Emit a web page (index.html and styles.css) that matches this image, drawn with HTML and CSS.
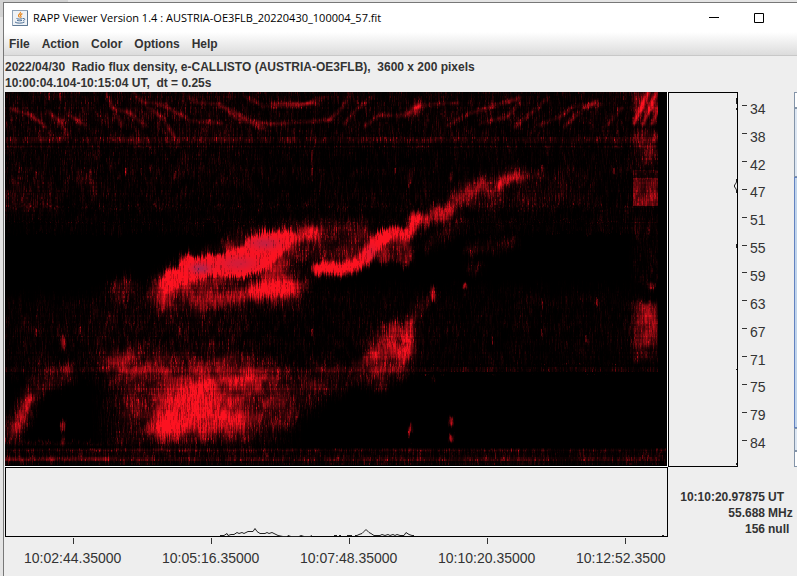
FILE: index.html
```html
<!DOCTYPE html>
<html lang="en">
<head>
<meta charset="utf-8">
<title>RAPP Viewer Version 1.4</title>
<link rel="stylesheet" href="styles.css">
</head>
<body>
<div class="window">
  <header class="titlebar">
    <svg class="app-icon" viewBox="0 0 16 16" aria-hidden="true">
      <rect x=".5" y=".5" width="15" height="15" fill="#eef2f6" stroke="#8fa3b8"/>
      <path d="M1 15.5h14.5V1" fill="none" stroke="#5d7894"/>
      <path d="M8.2 2c1.4 1.6-2.6 2.4-1.6 4.2l1 1.2M10.4 3.6C8.4 4.6 8 5.300 9 6.400c.4.6 0 1-.6 1.500" fill="none" stroke="#e8861c" stroke-width="1.200"/>
      <path d="M4.500 8.500c1.500.8 4.500.8 6 0M5 10.300c1.300.6 3.700.6 5 0M3 12c1.500 1.500 7.500 1.500 9.500 0M11 8.500c2.300-.5 2.300 1.600.2 2.300" fill="none" stroke="#4c6f96"/>
    </svg>
    <h1 class="title">RAPP Viewer Version 1.4 : AUSTRIA-OE3FLB_20220430_100004_57.fit</h1>
    <div class="controls">
      <button class="control" type="button" aria-label="Minimize"><svg viewBox="0 0 10 10"><path d="M0 4.500h10"/></svg></button>
      <button class="control" type="button" aria-label="Maximize"><svg viewBox="0 0 10 10"><path d="M.5.5h9v9h-9z"/></svg></button>
    </div>
  </header>
  <nav class="menubar">
    <button type="button">File</button>
    <button type="button">Action</button>
    <button type="button">Color</button>
    <button type="button">Options</button>
    <button type="button">Help</button>
  </nav>
  <section class="info">
    <p>2022/04/30  Radio flux density, e-CALLISTO (AUSTRIA-OE3FLB),  3600 x 200 pixels</p>
    <p>10:00:04.104-10:15:04 UT,  dt = 0.25s</p>
  </section>
  <main class="viewer">
    <div class="spectrum"><canvas id="spectrum" width="662" height="374" role="img" aria-label="Radio flux spectrogram"></canvas></div>
    <div class="frequency-profile">
      <svg viewBox="0 0 70 375" preserveAspectRatio="none" aria-hidden="true">
        <path d="M68.500 6v6M68.500 16v2M68.500 87v3l-1 2-1 1v2l1 1 1 2v3M68.500 152v4M68.500 277v1M68.500 371v2"/>
      </svg>
    </div>
    <div class="side">
      <ol class="y-axis">
        <li><span>34</span></li><li><span>38</span></li><li><span>42</span></li><li><span>47</span></li><li><span>51</span></li><li><span>55</span></li><li><span>59</span></li><li><span>63</span></li><li><span>67</span></li><li><span>71</span></li><li><span>75</span></li><li><span>79</span></li><li><span>84</span></li>
      </ol>
      <div class="scrollbar" aria-hidden="true"><i class="arrow"></i><i class="track"></i><i class="thumb"></i><i class="track-end"></i><i class="arrow"></i></div>
    </div>
    <div class="time-profile">
      <svg viewBox="0 0 663 70" preserveAspectRatio="none" aria-hidden="true">
        <path d="M215 68.500h4l3-2 1 2 3-1h3l3-2 2 1 3-1 2 1 4-2h5l2-3 2 3 3 2h5l2-1 2 1 3-1 2 1 4 2 5 1h4l1-1 3 1h8l2-1 3 1h6l2-1M329 68.500h3M334 68.500h2M342 68.500h5M350 68.500h2l2-1 3-1 2-2 2-2 3 3 2 1 3 2h6l2-1 3 1 3-1 2 1 3-1 2 1 2-1 3 1h4l2-3 3 2 3 1h2M657 68.500h2"/>
      </svg>
    </div>
    <dl class="readout">
      <dt>10:10:20.97875</dt><dd>UT</dd>
      <dt>55.688</dt><dd>MHz</dd>
      <dt>156</dt><dd>null</dd>
    </dl>
    <ol class="x-axis">
      <li>10:02:44.35000</li><li>10:05:16.35000</li><li>10:07:48.35000</li><li>10:10:20.35000</li><li>10:12:52.3500</li>
    </ol>
  </main>
</div>
<script src="spectrum.js"></script>
</body>
</html>
```
FILE: styles.css
```css
* { box-sizing: border-box; }

body {
  margin: 0;
  min-height: 100vh;
  padding: 2px 0 0 3px;
  display: flex;
  background: linear-gradient(#d2d2d2, #d2d2d2) 0 0 / 68px 17px no-repeat, #e4e4e4;
  color: #333;
  font: bold 12px/16px "Liberation Sans", Arial, sans-serif;
}

.window {
  flex: 1;
  min-width: 0;
  display: flex;
  flex-direction: column;
  border: solid #777;
  border-width: 1px 0 0 1px;
  background: #eee;
}

.titlebar {
  height: 29px;
  padding-left: 8px;
  display: flex;
  align-items: center;
  gap: 5px;
  background: #fff;
}
.app-icon { width: 16px; height: 16px; flex: none; }
.title {
  margin: 0;
  flex: 1;
  min-width: 0;
  overflow: hidden;
  white-space: nowrap;
  color: #000;
  font: 11px/20px "Open Sans", "Noto Sans", sans-serif;
}
.controls { display: flex; padding-right: 16px; }
.control {
  width: 45px;
  height: 29px;
  padding: 0;
  border: 0;
  background: none;
  display: grid;
  place-items: center;
}
.control svg { width: 10px; height: 10px; fill: none; stroke: #000; }

.menubar {
  height: 24px;
  padding-left: 5px;
  display: flex;
  align-items: center;
  gap: 12px;
  border-bottom: 1px solid #c8c8c8;
  background: linear-gradient(#fff, #dcdcdc);
}
.menubar button {
  padding: 0;
  border: 0;
  background: none;
  color: inherit;
  font: inherit;
}

.info { padding: 3px 0 1px 1px; }
.info p { margin: 0; white-space: pre; overflow: hidden; }

.viewer {
  flex: 1;
  padding-left: 1px;
  display: grid;
  grid-template-columns: minmax(0, 1fr) 70px 59px;
  grid-template-rows: minmax(240px, 1fr) 70px 39px;
}
.spectrum {
  position: relative;
  border: solid #fff;
  border-width: 0 1px 1px 0;
  background: #000;
}
.spectrum canvas {
  position: absolute;
  width: 100%;
  height: 100%;
}
.frequency-profile, .time-profile { position: relative; border: 1px solid #000; }
.viewer svg {
  position: absolute;
  inset: -1px;
  width: calc(100% + 2px);
  height: calc(100% + 2px);
  fill: none;
  stroke: #222;
}

.side { display: flex; justify-content: space-between; }
.y-axis {
  margin: 0;
  padding: 0 0 13px 4px;
  display: grid;
  grid-auto-rows: 1fr;
  list-style: none;
  font: 14px/16px "Liberation Sans", Arial, sans-serif;
}
.y-axis li { display: flex; align-items: center; gap: 3px; }
.y-axis li::before { content: ""; width: 5px; height: 1px; background: #333; }
.y-axis span { padding-top: 6px; }

.scrollbar { width: 3px; display: flex; flex-direction: column; }
.scrollbar i { border: 1px solid #8494a8; border-right: 0; }
.arrow { height: 16px; background: #fff; }
.track { flex: 68; background: #dce6f2; }
.thumb { flex: 253; background: #c0d4ec; }
.scrollbar .thumb { border-color: #6382bf; }
.track-end { flex: 21; background: #dce6f2; }

.readout {
  grid-column: 2 / 4;
  margin: 0;
  padding: 22px 0 0;
  display: grid;
  grid-template-columns: 1fr 29px;
  grid-auto-rows: 16px;
  column-gap: 3px;
}
.readout dt { text-align: right; }
.readout dd { margin: 0; }

.x-axis {
  margin: 0;
  padding: 0;
  display: grid;
  grid-template-columns: repeat(4, 138fr) 111fr;
  list-style: none;
  white-space: nowrap;
  font: 14px/16px "Liberation Sans", Arial, sans-serif;
}
.x-axis li { padding: 1px 0 0 19px; }
.x-axis li::before {
  content: "";
  display: block;
  width: 1px;
  height: 6px;
  margin: 0 0 6px 49px;
  background: #333;
}
```
FILE: spectrum.js
```js
const canvas = document.getElementById("spectrum");
const W = canvas.width, H = canvas.height;
const OX = 5, OY = 92;

// Brightness mask: every source is added in white, then modulated by noise.
const mask = document.createElement("canvas");
mask.width = W;
mask.height = H;
const m = mask.getContext("2d", { willReadFrequently: true });
m.fillStyle = "#000";
m.fillRect(0, 0, W, H);
m.translate(-OX, -OY);
m.lineJoin = "round";
m.lineCap = "round";

function setup(alpha, blur, color) {
  m.globalCompositeOperation = color ? "source-over" : "lighter";
  m.filter = blur ? `blur(${blur}px)` : "none";
  m.fillStyle = m.strokeStyle = color || "#fff";
  m.globalAlpha = alpha;
}
function line(points, width, alpha, blur) {
  setup(alpha, blur);
  m.lineWidth = width;
  m.beginPath();
  points.forEach(([x, y]) => m.lineTo(x, y));
  m.stroke();
}
function poly(points, alpha, blur, color) {
  setup(alpha, blur, color);
  m.beginPath();
  points.forEach(([x, y]) => m.lineTo(x, y));
  m.closePath();
  m.fill();
}
function rect(x, y, w, h, alpha, blur = 0, color) {
  poly([[x, y], [x + w, y], [x + w, y + h], [x, y + h]], alpha, blur, color);
}
function blob(x, y, rx, ry, alpha, blur) {
  setup(alpha, blur);
  m.beginPath();
  m.ellipse(x, y, rx, ry, 0, 0, Math.PI * 2);
  m.fill();
}

// Background bands
rect(5, 92, 661, 52, 0.07);
rect(5, 144, 661, 68, 0.04);
rect(5, 212, 661, 22, 0.03);
rect(95, 290, 565, 75, 0.045, 6);
rect(5, 300, 240, 75, 0.06, 6);
rect(5, 92, 230, 100, 0.03, 8);
rect(5, 137, 661, 6, 0.1);
rect(5, 146, 661, 2, 0.08);
rect(5, 206, 661, 2, 0.06);
rect(5, 222, 661, 1, 0.06);
rect(5, 367, 661, 5, 0.09);
rect(5, 448, 661, 17, 0.09);
rect(5, 449, 661, 2, 0.08);
rect(5, 457, 661, 4, 0.12);
rect(5, 457, 110, 4, 0.2, 1);
rect(5, 442, 110, 3, 0.1, 1);
blob(30, 195, 24, 18, 0.12, 6);
blob(90, 180, 10, 10, 0.1, 5);

// Drifting interference near the top of the band
[
  [[12, 109], [30, 115], [46, 127]],
  [[48, 111], [58, 119], [68, 135]],
  [[68, 114], [86, 126]],
  [[106, 94], [113, 108], [122, 126]],
  [[112, 108], [130, 113], [146, 126]],
  [[134, 93], [146, 105], [164, 119], [174, 136]],
  [[146, 102], [165, 106], [192, 121], [222, 123]],
  [[185, 94], [198, 103], [222, 105], [250, 121], [272, 124], [330, 120]],
  [[222, 107], [238, 119], [264, 128]],
  [[245, 96], [262, 106], [300, 106], [324, 97]],
  [[272, 103], [318, 104]],
  [[328, 121], [342, 108], [350, 94]],
  [[344, 124], [354, 112], [372, 97]],
  [[365, 126], [380, 115], [405, 116], [419, 106]],
  [[412, 107], [430, 105], [458, 103]],
  [[448, 126], [468, 114], [490, 107], [520, 98]],
  [[480, 124], [507, 117], [520, 103]],
  [[515, 127], [534, 111], [548, 98]],
  [[540, 125], [560, 117], [573, 106], [602, 105]],
  [[565, 127], [578, 113], [596, 101]],
  [[606, 126], [622, 108]]
].forEach(p => line(p, 4, 0.23, 1));
blob(412, 113, 9, 4, 0.28, 2);
blob(418, 105, 5, 6, 0.16, 2);
blob(132, 111, 8, 3, 0.16, 2);
blob(61, 121, 7, 3, 0.18, 2);

// Upper lane of the burst
poly([[150, 296], [158, 272], [174, 264], [190, 254], [220, 248], [232, 234], [320, 222], [372, 222], [372, 262], [320, 258], [290, 268], [240, 283], [180, 296]], 0.27, 4);
poly([[158, 285], [166, 273], [180, 266], [183, 256], [222, 257], [228, 251], [240, 249], [249, 240], [262, 234], [292, 234], [290, 244], [278, 256], [266, 269], [246, 276], [196, 277], [176, 285]], 1, 2);
line([[285, 240], [300, 236], [317, 233]], 11, 0.55, 3);
line([[282, 250], [270, 270]], 18, 0.25, 4);
blob(228, 244, 7, 4, 0.25, 3);
blob(122, 288, 12, 12, 0.26, 4);
blob(165, 302, 8, 5, 0.5, 3);
line([[164, 290], [172, 284], [185, 278]], 12, 0.45, 4);
line([[200, 303], [222, 299], [242, 295], [265, 291], [290, 290]], 12, 0.46, 4);
blob(272, 289, 26, 10, 0.46, 4);
blob(288, 280, 24, 11, 0.27, 5);
rect(150, 284, 150, 24, 0.2, 6);

// Central lane and its tail
line([[318, 269], [336, 269], [355, 266], [367, 257], [374, 244], [384, 237]], 12, 0.85, 2);
line([[325, 267], [345, 264]], 16, 0.2, 4);
poly([[378, 232], [412, 226], [412, 264], [378, 264]], 0.42, 2);
line([[386, 237], [400, 233], [411, 230]], 9, 0.45, 3);
line([[410, 236], [414, 222], [418, 215]], 8, 0.45, 2);
line([[416, 220], [428, 216], [449, 211]], 13, 0.52, 3);
line([[450, 206], [466, 196], [476, 186], [493, 185], [507, 180], [520, 176]], 16, 0.3, 4);
line([[472, 190], [484, 187]], 9, 0.28, 3);
line([[500, 183], [508, 179], [518, 177]], 8, 0.45, 2);
line([[518, 175], [545, 177]], 4, 0.14, 2);
rect(530, 174, 65, 30, 0.07, 4);
rect(450, 192, 80, 16, 0.12, 4);
line([[425, 244], [445, 233], [460, 226]], 10, 0.17, 4);
line([[470, 249], [512, 242]], 9, 0.2, 3);
blob(475, 268, 9, 5, 0.16, 3);
blob(410, 177, 3, 10, 0.18, 1);
blob(451, 177, 2, 5, 0.36, 1);

// Low-frequency emission
line([[12, 434], [19, 421], [27, 406], [32, 392], [48, 378], [67, 374]], 17, 0.3, 4);
line([[17, 430], [24, 412], [31, 397]], 9, 0.28, 3);
line([[27, 410], [31, 396]], 4, 0.25, 1);
rect(107, 352, 150, 24, 0.18, 7);
blob(120, 358, 17, 10, 0.17, 5);
line([[114, 356], [136, 374], [160, 376]], 9, 0.2, 4);
poly([[110, 372], [265, 365], [320, 384], [296, 430], [240, 443], [115, 443]], 0.25, 10);
poly([[160, 390], [185, 376], [225, 374], [238, 410], [255, 432], [143, 438]], 0.28, 8);
blob(170, 427, 17, 12, 0.55, 5);
blob(190, 402, 28, 15, 0.34, 7);
blob(200, 386, 14, 7, 0.36, 5);
blob(243, 381, 22, 7, 0.44, 5);
blob(220, 422, 30, 15, 0.24, 7);
blob(132, 405, 12, 8, 0.22, 5);
blob(262, 402, 28, 28, 0.15, 8);
blob(325, 378, 24, 18, 0.18, 6);
poly([[350, 376], [365, 348], [375, 328], [398, 322], [413, 320], [413, 370], [395, 382], [360, 385]], 0.24, 4);
poly([[358, 364], [372, 347], [382, 331], [413, 325], [414, 359]], 0.32, 4);
rect(402, 322, 11, 38, 0.18, 2);
line([[411, 318], [420, 305], [433, 295]], 10, 0.24, 3);
blob(380, 382, 8, 15, 0.22, 4);
rect(375, 341, 42, 3, 0.5, 1, "#222");

// Gain steps at the end of the sweep
rect(633, 92, 25, 20, 0.3, 1);
rect(633, 112, 25, 14, 0.12, 1);
rect(633, 130, 25, 36, 0.21, 3);
rect(633, 170, 25, 8, 0.12);
rect(633, 178, 25, 28, 0.34, 0);
rect(633, 212, 25, 70, 0.05, 2);
rect(633, 302, 25, 44, 0.33, 2);
rect(640, 302, 18, 36, 0.1, 2);
rect(633, 345, 25, 16, 0.16, 2);
blob(651, 286, 4, 4, 0.25, 1);
for (let i = 0; i < 4; i++) line([[634 + i * 9, 124], [648 + i * 9, 92]], 4, 0.5, 1);
line([[648, 158], [656, 135]], 4, 0.3, 2);
rect(658, 92, 9, 355, 1, 0, "#000");

// Narrow-band spikes
[[410, 430, 2, 6], [451, 421, 2, 5], [451, 438, 2, 4], [63, 425, 2, 6], [63, 440, 1, 7], [63, 342, 2, 8], [433, 295, 2, 8], [433, 384, 1, 7], [410, 450, 1, 3], [465, 287, 2, 3]]
  .forEach(([x, y, rx, ry]) => blob(x, y, rx, ry, 0.6, 1));
[[36, 175], [60, 96], [49, 96], [126, 173], [141, 172], [175, 174], [312, 172], [395, 173], [542, 168], [614, 171], [36, 332], [80, 332], [312, 333], [180, 333], [542, 336], [586, 337], [542, 305], [597, 302], [492, 337]]
  .forEach(([x, y]) => line([[x, y - 3], [x, y + 4]], 1, 0.5, 0));
line([[312, 150], [312, 182]], 1, 0.36, 0);

// Quiet patches
poly([[5, 234], [150, 234], [160, 254], [150, 270], [5, 274]], 0.8, 5, "#000");
poly([[38, 404], [53, 402], [53, 434], [36, 430]], 0.8, 4, "#000");
poly([[340, 400], [402, 390], [402, 444], [280, 444], [306, 420]], 0.9, 4, "#000");
rect(424, 380, 20, 66, 1, 3, "#000");
rect(462, 378, 196, 68, 1, 3, "#000");

const src = m.getImageData(0, 0, W, H).data;
const out = canvas.getContext("2d");
const image = out.createImageData(W, H);

function hash(x, y) {
  let h = Math.imul(x + 17, 374761393) + Math.imul(y + 29, 668265263);
  h = Math.imul(h ^ (h >>> 13), 1274126177);
  h = Math.imul(h ^ (h >>> 16), 2246822519);
  return ((h ^ (h >>> 15)) >>> 0) / 4294967296;
}
// Value noise along y only: independent columns, smooth within each.
function streak(x, y, period) {
  const p = y / period + hash(x, 77);
  const k = Math.floor(p), f = p - k, s = f * f * (3 - 2 * f);
  return hash(x, k) * (1 - s) + hash(x, k + 1) * s;
}
// Value noise in both directions.
function cloud(x, y, sx, sy) {
  const px = x / sx, k = Math.floor(px), f = px - k, s = f * f * (3 - 2 * f);
  return streak(k + 5000, y, sy) * (1 - s) + streak(k + 5001, y, sy) * s;
}
function heat(x, y) {
  const spots = [[200, 268, 9, 5, 1], [238, 263, 18, 7, 0.55], [264, 243, 14, 6, 0.7], [371, 252, 6, 9, 0.3]];
  return spots.reduce((s, [cx, cy, rx, ry, a]) =>
    s + a * Math.exp(-(((x - cx) / rx) ** 2) - ((y - cy) / ry) ** 2), 0);
}

for (let y = 0; y < H; y++) {
  const channel = Math.floor(y * 200 / H);
  const gain = 0.55 + 0.5 * hash(channel, 9001);
  const ragged = y > 75 && y < 352;
  for (let x = 0; x < W; x++) {
    const i = (y * W + x) * 4;
    let sy = y;
    if (ragged && x < 620 && Math.abs(y - 277) > 4) {
      const wobble = (cloud(x, 40, 7, 9) - 0.5) * 5 + (hash(x, 31) - 0.5) * 5;
      sy = Math.max(0, Math.min(H - 1, Math.round(y + wobble)));
    }
    const base = src[(sy * W + x) * 4] / 255;
    const patch = 0.4 + 1.2 * cloud(x + 900, y, 9, 9);
    const level = base * (patch + (1 - patch) * Math.min(1, base));
    const n = 0.7 * streak(x, channel, 4) + 0.3 * hash(x + 3000, channel);
    const sparse = 4.5 * n ** 4;
    const dense = 0.45 + 0.95 * n;
    const mix = Math.min(1, level * 2);
    let v = level * 1.25 * (sparse * (1 - mix) + dense * mix);
    v *= gain + (1 - gain) * Math.min(1, level);
    v = Math.min(1, v);
    const hot = Math.min(1, heat(x + OX, y + OY)) * Math.min(1, level * 1.2);
    image.data[i] = 252 * v - 75 * hot;
    image.data[i + 1] = 18 * v + 18 * hot;
    image.data[i + 2] = 32 * v + 45 * hot;
    image.data[i + 3] = 255;
  }
}
out.putImageData(image, 0, 0);
```
